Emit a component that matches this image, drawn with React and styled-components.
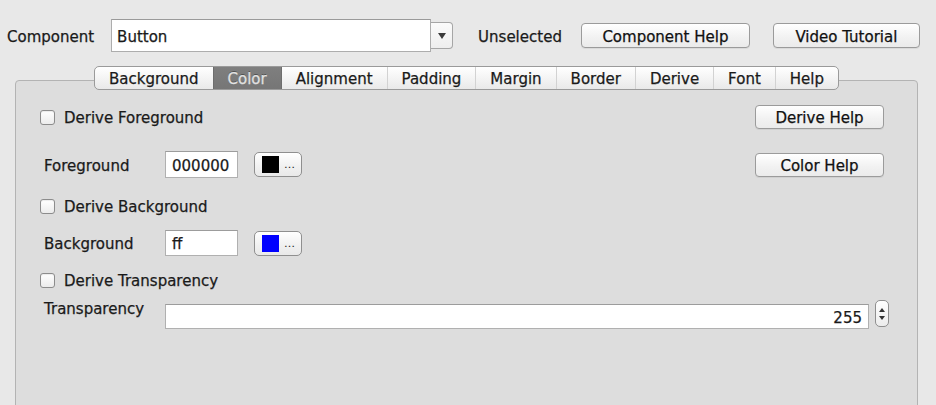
import React from "react";
import styled, { createGlobalStyle } from "styled-components";

const GlobalStyle = createGlobalStyle`
  html, body {
    margin: 0;
    padding: 0;
    background: #e8e8e8;
    overflow: hidden;
  }

  body {
    font-family: "DejaVu Sans", "Liberation Sans", sans-serif;
    font-size: 15px;
    color: #1a1a1a;
    -webkit-text-stroke: 0.25px currentColor;
  }
`;

const Page = styled.div`
  width: 936px;
  height: 405px;
`;

const TopBar = styled.div`
  display: flex;
  align-items: center;
  height: 33px;
  margin-top: 19px;
  padding-left: 7px;
`;

const Label = styled.span`
  display: inline-block;
  margin-left: ${(p) => p.$ml || "0"};
  padding-top: 2px;
  line-height: 18px;
  white-space: nowrap;
`;

const Combo = styled.div`
  display: flex;
  align-items: center;
  margin-left: 17px;
`;

const ComboField = styled.div`
  width: 320px;
  height: 33px;
  padding: 2px 0 0 5px;
  box-sizing: border-box;
  display: flex;
  align-items: center;
  background: #fff;
  border: 1px solid #adadad;
  border-top-color: #9a9a9a;
`;

const ComboArrow = styled.div`
  width: 21px;
  height: 25px;
  display: flex;
  align-items: center;
  justify-content: center;
  background: linear-gradient(#fbfbfb, #eeeeee);
  border: 1px solid #a6a6a6;
  border-left: none;
  border-radius: 0 4px 4px 0;

  &::after {
    content: "";
    border-left: 4px solid transparent;
    border-right: 4px solid transparent;
    border-top: 6px solid #3a3a3a;
  }
`;

const Button = styled.button`
  width: ${(p) => p.$w};
  height: ${(p) => p.$h || "25px"};
  margin-left: ${(p) => p.$ml || "0"};
  padding: 2px 0 0;
  font: inherit;
  color: #111;
  background: linear-gradient(#ffffff, #f1f1f1 60%, #ebebeb);
  border: 1px solid #9b9b9b;
  border-radius: 4px;
  box-shadow: 0 1px 0 rgba(0, 0, 0, 0.06);
  cursor: default;
`;

const TabArea = styled.div`
  margin-top: 14px;
  padding-left: 15px;
  width: 903px;
`;

const TabBar = styled.div`
  position: relative;
  z-index: 1;
  display: flex;
  justify-content: center;
`;

const Tabs = styled.div`
  display: flex;
  height: 22px;
  border: 1px solid #9a9a9a;
  border-radius: 5px;
  background: linear-gradient(#ffffff, #f3f3f3 55%, #e9e9e9);
  overflow: hidden;
`;

const Tab = styled.div`
  display: flex;
  align-items: center;
  padding: 2px 14px 0;
  line-height: 18px;
  white-space: nowrap;
  color: ${(p) => (p.$active ? "#e2e2e2" : "#1a1a1a")};
  background: ${(p) => (p.$active ? "linear-gradient(#7f7f7f, #767676)" : "transparent")};
  text-shadow: ${(p) => (p.$active ? "0 -1px 0 rgba(0,0,0,0.35)" : "none")};
  border-left: 1px solid ${(p) => (p.$active || p.$afterActive ? "#6e6e6e" : "#d2d2d2")};

  &:first-child {
    border-left: none;
  }
`;

const Panel = styled.div`
  margin-top: -10px;
  height: 340px;
  background: #dddddd;
  border: 1px solid #b3b3b3;
  border-radius: 4px 4px 0 0;
  padding: 24px 33px 0 0;
  box-sizing: border-box;
`;

const Row = styled.div`
  display: flex;
  align-items: ${(p) => (p.$top ? "flex-start" : "center")};
  height: ${(p) => p.$h};
  margin-top: ${(p) => p.$mt || "0"};
  margin-right: ${(p) => p.$mr || "0"};
  padding-left: ${(p) => (p.$check ? "24px" : "28px")};
`;

const Check = styled.label`
  display: flex;
  align-items: center;
  gap: 9px;
  line-height: 18px;

  & > span:last-child {
    padding-top: 2px;
  }
`;

const Box = styled.span`
  width: 13px;
  height: 13px;
  border: 1px solid #8c8c8c;
  border-radius: 3px;
  background: linear-gradient(#ffffff, #ececec);
  box-shadow: inset 0 1px 1px rgba(0, 0, 0, 0.08);
`;

const Spacer = styled.div`
  flex: 1;
`;

const FieldLabel = styled.span`
  width: 121px;
  line-height: 18px;
  padding-top: ${(p) => p.$pt || "2px"};
`;

const TextField = styled.div`
  width: ${(p) => p.$w || "66px"};
  flex: ${(p) => (p.$grow ? "1" : "none")};
  height: ${(p) => p.$h || "25px"};
  margin-top: ${(p) => p.$mt || "0"};
  padding: 2px 6px 0 6px;
  box-sizing: border-box;
  display: flex;
  align-items: center;
  justify-content: ${(p) => (p.$right ? "flex-end" : "flex-start")};
  background: #fff;
  border: 1px solid #b0b0b0;
  border-top-color: #9c9c9c;
`;

const ColorButton = styled.div`
  width: 48px;
  height: 25px;
  margin-left: 16px;
  display: flex;
  align-items: center;
  gap: 5px;
  padding-left: 7px;
  box-sizing: border-box;
  background: linear-gradient(#ffffff, #f0f0f0 60%, #e9e9e9);
  border: 1px solid #8f8f8f;
  border-radius: 5px;
  font-size: 11px;
  line-height: 1;
  -webkit-text-stroke: 0;
`;

const Swatch = styled.span`
  width: 17px;
  height: 17px;
  background: ${(p) => p.$color};
`;

const Spinner = styled.div`
  width: 12px;
  height: 25px;
  margin-left: 6px;
  display: flex;
  flex-direction: column;
  align-items: center;
  justify-content: center;
  gap: 4px;
  background: linear-gradient(#ffffff, #ececec);
  border: 1px solid #8f8f8f;
  border-radius: 5px;
`;

const Arrow = styled.span`
  border-left: 3px solid transparent;
  border-right: 3px solid transparent;
  ${(p) => (p.$up ? "border-bottom" : "border-top")}: 4px solid #333;
`;

const tabs = ["Background", "Color", "Alignment", "Padding", "Margin", "Border", "Derive", "Font", "Help"];
const active = 1;

export default function App() {
  return (
    <Page>
      <GlobalStyle />
      <TopBar>
        <Label>Component</Label>
        <Combo>
          <ComboField>Button</ComboField>
          <ComboArrow />
        </Combo>
        <Label $ml="25px">Unselected</Label>
        <Button $w="169px" $ml="19px">Component Help</Button>
        <Button $w="147px" $ml="23px">Video Tutorial</Button>
      </TopBar>

      <TabArea>
        <TabBar>
          <Tabs>
            {tabs.map((t, i) => (
              <Tab key={t} $active={i === active} $afterActive={i === active + 1}>
                {t}
              </Tab>
            ))}
          </Tabs>
        </TabBar>
        <Panel>
          <Row $check $h="24px">
            <Check>
              <Box />
              <span>Derive Foreground</span>
            </Check>
            <Spacer />
            <Button $w="129px" $h="24px">Derive Help</Button>
          </Row>
          <Row $h="27px" $mt="22px">
            <FieldLabel>Foreground</FieldLabel>
            <TextField $w="73px" $h="27px">000000</TextField>
            <ColorButton>
              <Swatch $color="#000" />…
            </ColorButton>
            <Spacer />
            <Button $w="129px" $h="24px">Color Help</Button>
          </Row>
          <Row $check $h="20px" $mt="18px">
            <Check>
              <Box />
              <span>Derive Background</span>
            </Check>
          </Row>
          <Row $h="26px" $mt="14px">
            <FieldLabel>Background</FieldLabel>
            <TextField $w="73px" $h="26px">ff</TextField>
            <ColorButton>
              <Swatch $color="#0000ff" />…
            </ColorButton>
          </Row>
          <Row $check $h="20px" $mt="14px">
            <Check>
              <Box />
              <span>Derive Transparency</span>
            </Check>
          </Row>
          <Row $top $h="30px" $mt="10px" $mr="-5px">
            <FieldLabel $pt="0">Transparency</FieldLabel>
            <TextField $grow $right $mt="4px">255</TextField>
            <Spinner>
              <Arrow $up />
              <Arrow />
            </Spinner>
          </Row>
        </Panel>
      </TabArea>
    </Page>
  );
}
